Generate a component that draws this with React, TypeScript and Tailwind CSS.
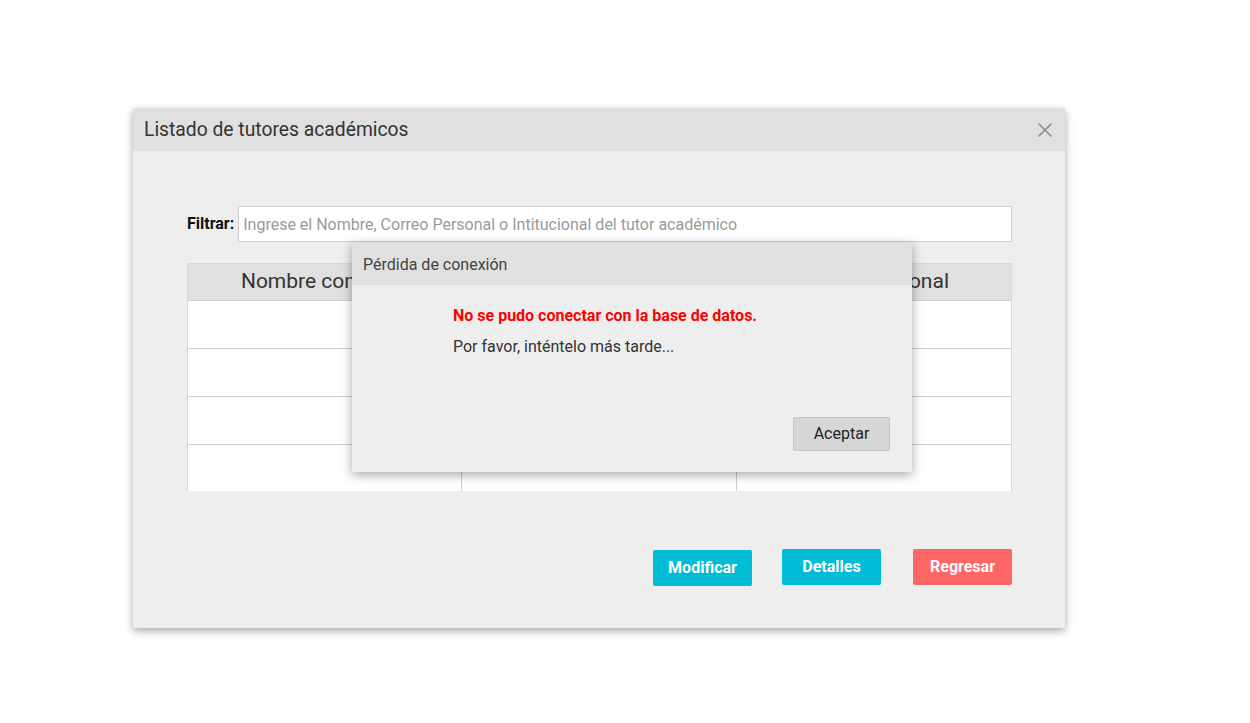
import React from "react";

const ROWS = [0, 1, 2, 3];

function CloseIcon() {
  return (
    <svg width="16" height="16" viewBox="0 0 16 16" className="block">
      <path d="M2 2 L14 14 M14 2 L2 14" stroke="#8a8a8a" strokeWidth="1.6" strokeLinecap="round" />
    </svg>
  );
}

function ConnectionLostDialog() {
  return (
    <div className="absolute left-[219px] top-[134px] w-[560px] h-[230px] bg-[#eeeeee] shadow-[0_3px_10px_rgba(0,0,0,0.35)] flex flex-col">
      <div className="h-[43px] bg-[#e0e0e0] flex items-center pl-[11px] pt-[3px]">
        <span className="text-[16px] text-[#444]">Pérdida de conexión</span>
      </div>
      <div className="flex-1 flex flex-col pl-[101px] pt-[21px]">
        <p className="text-[16px] font-bold text-[#ff0000] leading-5">No se pudo conectar con la base de datos.</p>
        <p className="text-[16px] text-[#333] leading-5 mt-[11px]">Por favor, inténtelo más tarde...</p>
      </div>
      <div className="flex justify-end pr-[22px] pb-[21px]">
        <button
          type="button"
          className="w-[97px] h-[34px] bg-[#d6d6d6] border border-[#c6c6c6] rounded-[2px] text-[16px] text-[#222]"
        >
          Aceptar
        </button>
      </div>
    </div>
  );
}

export default function App() {
  return (
    <div
      className="min-h-[723px] bg-white pt-[108px] pl-[133px]"
      style={{ fontFamily: "Roboto, 'Liberation Sans', sans-serif" }}
    >
      <div className="relative w-[932px] bg-[#eeeeee] shadow-[0_3px_8px_rgba(0,0,0,0.35)]">
        <div className="h-[43px] bg-[#e0e0e0] flex items-center justify-between pl-[11px] pr-[12px]">
          <span className="text-[19.3px] text-[#333] pt-px">Listado de tutores académicos</span>
          <CloseIcon />
        </div>

        <div className="px-[53px] pt-[55px] pb-[42px]">
          <div className="flex items-center">
            <label className="text-[16px] font-bold text-[#111] pl-px pr-[4px]">Filtrar:</label>
            <input
              type="text"
              placeholder="Ingrese el Nombre, Correo Personal o Intitucional del tutor académico"
              className="flex-1 h-[36px] bg-white border border-[#cfcfcf] px-[4px] text-[16px] text-[#333] placeholder:text-[#9a9a9a] outline-none"
            />
          </div>

          <div className="mt-[21px] ml-px h-[228px] overflow-hidden border-x border-t border-[#d8d8d8] bg-white">
            <div className="grid grid-cols-3 h-[37px] bg-[#e0e0e0] border-b border-[#cccccc] text-[21px] text-[#333]">
              <div className="flex items-center justify-center">Nombre completo</div>
              <div className="flex items-center justify-center">Correo Institucional</div>
              <div className="flex items-center justify-center">Correo Personal</div>
            </div>
            {ROWS.map((r) => (
              <div key={r} className="grid grid-cols-3 h-[48px] border-b border-[#cccccc]">
                <div className="border-r border-[#cccccc]" />
                <div className="border-r border-[#cccccc]" />
                <div />
              </div>
            ))}
          </div>

          <div className="flex justify-end items-start mt-[58px]">
            <button
              type="button"
              className="w-[99px] h-[36px] mt-px bg-[#00bcd4] rounded-[2px] text-white font-bold text-[16px]"
            >
              Modificar
            </button>
            <button
              type="button"
              className="w-[99px] h-[36px] ml-[30px] bg-[#00bcd4] rounded-[2px] text-white font-bold text-[16px]"
            >
              Detalles
            </button>
            <button
              type="button"
              className="w-[99px] h-[36px] ml-[32px] bg-[#ff6666] rounded-[2px] text-white font-bold text-[16px]"
            >
              Regresar
            </button>
          </div>
        </div>

        <ConnectionLostDialog />
      </div>
    </div>
  );
}
